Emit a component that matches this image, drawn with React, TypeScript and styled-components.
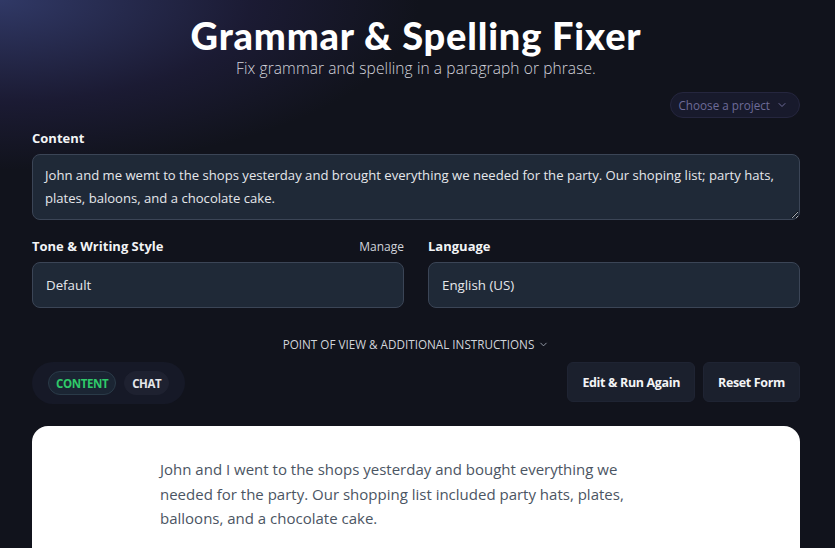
import styled, { createGlobalStyle } from 'styled-components';

const GlobalStyle = createGlobalStyle`
  html, body {
    margin: 0;
    padding: 0;
    background: #11131c;
  }
  body {
    font-family: 'Open Sans', 'Noto Sans', sans-serif;
    color: #f3f4f6;
  }
  * {
    box-sizing: border-box;
  }
`;

function Chevron({ size = 10, color = 'currentColor' }: { size?: number; color?: string }) {
  return (
    <svg width={size} height={size} viewBox="0 0 24 24" fill="none" stroke={color} strokeWidth={2} strokeLinecap="round" strokeLinejoin="round">
      <path d="m6 9 6 6 6-6" />
    </svg>
  );
}

export default function App() {
  return (
    <Page>
      <GlobalStyle />
      <Header>
        <Title>Grammar &amp; Spelling Fixer</Title>
        <Subtitle>Fix grammar and spelling in a paragraph or phrase.</Subtitle>
      </Header>
      <ProjectRow>
        <ProjectPicker>
          Choose a project
          <Chevron size={12} />
        </ProjectPicker>
      </ProjectRow>
      <ContentField>
        <LabelRow>
          <Label>Content</Label>
        </LabelRow>
        <TextArea
          defaultValue="John and me wemt to the shops yesterday and brought everything we needed for the party. Our shoping list; party hats, plates, baloons, and a chocolate cake."
        />
      </ContentField>
      <TwoCols>
        <Field>
          <LabelRow>
            <Label>Tone &amp; Writing Style</Label>
            <Manage>Manage</Manage>
          </LabelRow>
          <SelectBox>Default</SelectBox>
        </Field>
        <Field>
          <LabelRow>
            <Label>Language</Label>
          </LabelRow>
          <SelectBox>English (US)</SelectBox>
        </Field>
      </TwoCols>
      <Toggle>
        POINT OF VIEW &amp; ADDITIONAL INSTRUCTIONS
        <Chevron size={11} color="#9ca3af" />
      </Toggle>
      <ActionBar>
        <Tabs>
          <Tab $active>CONTENT</Tab>
          <Tab>CHAT</Tab>
        </Tabs>
        <Buttons>
          <Button>Edit &amp; Run Again</Button>
          <Button>Reset Form</Button>
        </Buttons>
      </ActionBar>
      <ResultCard>
        <ResultText>
          John and I went to the shops yesterday and bought everything we needed for the party. Our shopping list included party hats, plates, balloons, and a chocolate cake.
        </ResultText>
      </ResultCard>
    </Page>
  );
}

const Page = styled.div`
  min-height: 548px;
  padding: 12px 35px 0 32px;
  background:
    radial-gradient(ellipse 420px 170px at 0px 0px, rgba(56, 66, 120, 0.8), rgba(42, 38, 86, 0.4) 60%, rgba(17, 19, 28, 0) 100%),
    #11131c;
  display: flex;
  flex-direction: column;
`;

const Header = styled.div`
  display: flex;
  flex-direction: column;
  align-items: center;
`;

const Title = styled.h1`
  margin: 0;
  font-family: 'Lato', 'Open Sans', sans-serif;
  font-weight: 900;
  font-size: 38px;
  line-height: 46px;
  letter-spacing: 0.8px;
  color: #ffffff;
`;

const Subtitle = styled.p`
  margin: 0;
  font-size: 15.5px;
  line-height: 20px;
  font-weight: 300;
  letter-spacing: 0.1px;
  color: #d4d4dc;
`;

const ProjectRow = styled.div`
  display: flex;
  justify-content: flex-end;
  margin-top: 14px;
`;

const ProjectPicker = styled.div`
  display: flex;
  align-items: center;
  gap: 6px;
  height: 26px;
  padding: 0 11px 0 7px;
  border-radius: 13px;
  background: #181a2c;
  border: 1px solid #25263e;
  color: #6d6b98;
  font-size: 11.7px;
`;

const Field = styled.div`
  display: flex;
  flex-direction: column;
  gap: 6px;
`;

const ContentField = styled(Field)`
  margin-top: 10px;
`;

const LabelRow = styled.div`
  display: flex;
  justify-content: space-between;
  align-items: center;
  height: 20px;
`;

const Label = styled.span`
  font-size: 13px;
  font-weight: 700;
  color: #f3f4f6;
`;

const Manage = styled.span`
  font-size: 12px;
  color: #d1d5db;
`;

const TextArea = styled.textarea`
  height: 66px;
  width: 100%;
  resize: vertical;
  padding: 9px 12px;
  border-radius: 8px;
  background: #1f2937;
  border: 1px solid #3b4556;
  color: #e5e7eb;
  font-family: 'Open Sans', 'Noto Sans', sans-serif;
  font-size: 13.1px;
  line-height: 23px;
  outline: none;
`;

const TwoCols = styled.div`
  display: grid;
  grid-template-columns: 1fr 1fr;
  gap: 24px;
  margin-top: 16px;
`;

const SelectBox = styled.div`
  height: 46px;
  display: flex;
  align-items: center;
  padding: 0 13px;
  border-radius: 8px;
  background: #1f2937;
  border: 1px solid #3b4556;
  color: #e5e7eb;
  font-size: 13.3px;
`;

const Toggle = styled.div`
  display: flex;
  justify-content: center;
  align-items: center;
  gap: 4px;
  margin-top: 28px;
  font-size: 11.7px;
  color: #d1d5db;
`;

const ActionBar = styled.div`
  display: flex;
  justify-content: space-between;
  align-items: flex-start;
  margin-top: 10px;
`;

const Tabs = styled.div`
  display: flex;
  align-items: center;
  gap: 8px;
  height: 42px;
  padding: 0 16px;
  border-radius: 21px;
  background: #161927;
`;

const Tab = styled.div<{ $active?: boolean }>`
  height: 24px;
  display: flex;
  align-items: center;
  padding: 0 7px;
  border-radius: 12px;
  font-size: 11.5px;
  font-weight: 700;
  letter-spacing: -0.4px;
  background: ${(p) => (p.$active ? '#1b2533' : '#1e2130')};
  border: 1px solid ${(p) => (p.$active ? '#2a3a48' : '#1e2130')};
  color: ${(p) => (p.$active ? '#2fca6a' : '#e5e7eb')};
`;

const Buttons = styled.div`
  display: flex;
  gap: 8px;
`;

const Button = styled.button`
  height: 40px;
  padding: 0 14px;
  border-radius: 6px;
  border: 1px solid #1f2433;
  background: #1b202d;
  color: #f3f4f6;
  font-family: 'Open Sans', 'Noto Sans', sans-serif;
  font-size: 12.5px;
  font-weight: 700;
  letter-spacing: -0.35px;
`;

const ResultCard = styled.div`
  margin-top: 22px;
  background: #ffffff;
  border-radius: 16px 16px 0 0;
  padding: 31px 128px 40px;
  flex: 1;
`;

const ResultText = styled.p`
  margin: 0;
  max-width: 475px;
  font-size: 15px;
  line-height: 24.5px;
  color: #4b5563;
  font-weight: 400;
`;
